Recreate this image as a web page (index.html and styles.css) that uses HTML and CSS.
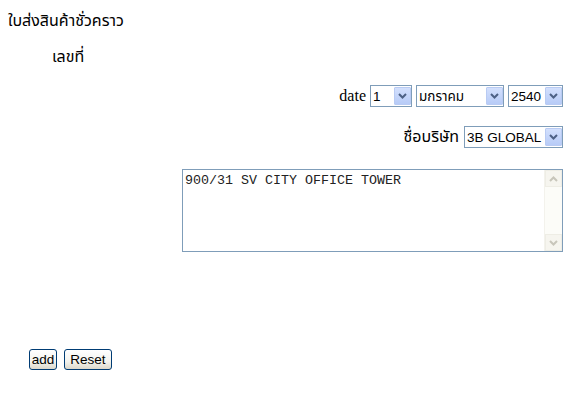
FILE: index.html
```html
<!DOCTYPE html>
<html lang="th">
<head>
    <meta charset="UTF-8">
    <meta name="viewport" content="width=device-width, initial-scale=1.0">
    <title>ใบส่งสินค้าชั่วคราว</title>
    <link rel="stylesheet" href="styles.css">
</head>
<body>
    <form class="slip" action="#" method="POST">
        <p class="title">ใบส่งสินค้าชั่วคราว</p>
        <p class="doc-no">เลขที่</p>

        <div class="row">
            <label class="label-date" for="day">date</label>
            <span class="combo combo-day">
                <select id="day" name="day"><option>1</option></select>
                <span class="drop"><svg width="9" height="6" viewBox="0 0 9 6"><path d="M1 1l3.5 3.5L8 1" fill="none" stroke="#4d6185" stroke-width="2"/></svg></span>
            </span>
            <span class="combo combo-month">
                <select id="month" name="month"><option>มกราคม</option></select>
                <span class="drop"><svg width="9" height="6" viewBox="0 0 9 6"><path d="M1 1l3.5 3.5L8 1" fill="none" stroke="#4d6185" stroke-width="2"/></svg></span>
            </span>
            <span class="combo combo-year">
                <select id="year" name="year"><option>2540</option></select>
                <span class="drop"><svg width="9" height="6" viewBox="0 0 9 6"><path d="M1 1l3.5 3.5L8 1" fill="none" stroke="#4d6185" stroke-width="2"/></svg></span>
            </span>
        </div>

        <div class="row row-company">
            <label class="label-thai" for="company">ชื่อบริษัท</label>
            <span class="combo combo-company">
                <select id="company" name="company"><option>3B GLOBAL</option></select>
                <span class="drop"><svg width="9" height="6" viewBox="0 0 9 6"><path d="M1 1l3.5 3.5L8 1" fill="none" stroke="#4d6185" stroke-width="2"/></svg></span>
            </span>
        </div>

        <div class="row row-address">
            <div class="memo">
                <textarea name="address" rows="5">900/31 SV CITY OFFICE TOWER</textarea>
                <div class="scroll">
                    <span class="scroll-btn"><svg width="9" height="6" viewBox="0 0 9 6"><path d="M1 5l3.5-3.5L8 5" fill="none" stroke="#c8c6bb" stroke-width="2"/></svg></span>
                    <span class="scroll-btn"><svg width="9" height="6" viewBox="0 0 9 6"><path d="M1 1l3.5 3.5L8 1" fill="none" stroke="#c8c6bb" stroke-width="2"/></svg></span>
                </div>
            </div>
        </div>

        <div class="actions">
            <button type="submit" class="btn-add">add</button>
            <button type="reset" class="btn-reset">Reset</button>
        </div>
    </form>
</body>
</html>
```

FILE: styles.css
```css
html {
    background: #fff;
}

body {
    margin: 8px 12px 8px 8px;
    font-family: 'Liberation Sans', Tahoma, 'Noto Sans Thai', Loma, Garuda, sans-serif;
    font-size: 13px;
    color: #000;
}

.slip {
    display: flex;
    flex-direction: column;
}

.title {
    margin: 3px 0 0;
    font-size: 16px;
    line-height: 20px;
}

.doc-no {
    margin: 16px 0 0 44px;
    font-size: 16px;
    line-height: 20px;
}

.row {
    display: flex;
    justify-content: flex-end;
    align-items: center;
    gap: 4px;
    margin-top: 18px;
}

.row-company {
    margin-top: 18px;
}

.row-address {
    margin-top: 20px;
}

.label-date {
    font-family: 'Liberation Serif', serif;
    font-size: 16px;
}

.label-thai {
    font-size: 16px;
    font-weight: normal;
    margin-right: 1px;
}

.combo {
    position: relative;
    display: inline-block;
    height: 22px;
}

.combo select {
    appearance: none;
    -webkit-appearance: none;
    width: 100%;
    height: 22px;
    margin: 0;
    padding: 0 18px 0 2px;
    border: 1px solid #7f9db9;
    border-radius: 0;
    background: #fff;
    font-family: 'Liberation Sans', 'Noto Sans Thai', Loma, sans-serif;
    font-size: 13.5px;
    color: #000;
    box-sizing: border-box;
}

.combo-day { width: 42px; }
.combo-month { width: 88px; }
.combo-year { width: 55px; }
.combo-company { width: 99px; }

.drop {
    position: absolute;
    top: 2px;
    right: 1px;
    width: 17px;
    height: 18px;
    display: flex;
    align-items: center;
    justify-content: center;
    background: linear-gradient(#d3e0fd, #b7cbf7);
    border: 1px solid #b9cbf3;
    box-sizing: border-box;
    border-radius: 1px;
    pointer-events: none;
}

.memo {
    display: flex;
    width: 381px;
    height: 83px;
    border: 1px solid #7f9db9;
    box-sizing: border-box;
    background: #fff;
}

.memo textarea {
    flex: 1;
    border: none;
    resize: none;
    margin: 0;
    padding: 3px 2px;
    font-family: 'Liberation Mono', monospace;
    font-size: 13.333px;
    line-height: 15px;
    color: #222;
    outline: none;
}

.scroll {
    width: 17px;
    display: flex;
    flex-direction: column;
    justify-content: space-between;
    background: #fcfcf8;
    border-left: 1px solid #f3f2ec;
}

.scroll-btn {
    height: 17px;
    display: flex;
    align-items: center;
    justify-content: center;
    background: #f6f5ef;
    border: 1px solid #eeede5;
    box-sizing: border-box;
}

.actions {
    display: flex;
    gap: 7px;
    margin: 97px 0 0 21px;
}

.actions button {
    height: 21px;
    padding: 0;
    border: 1px solid #003c74;
    border-radius: 3px;
    background: linear-gradient(#fff, #f3f3ee 60%, #dcd8cb);
    font-family: 'Liberation Sans', sans-serif;
    font-size: 13.5px;
    color: #000;
}

.actions .btn-add {
    width: 28px;
}

.actions .btn-reset {
    width: 48px;
}
```
